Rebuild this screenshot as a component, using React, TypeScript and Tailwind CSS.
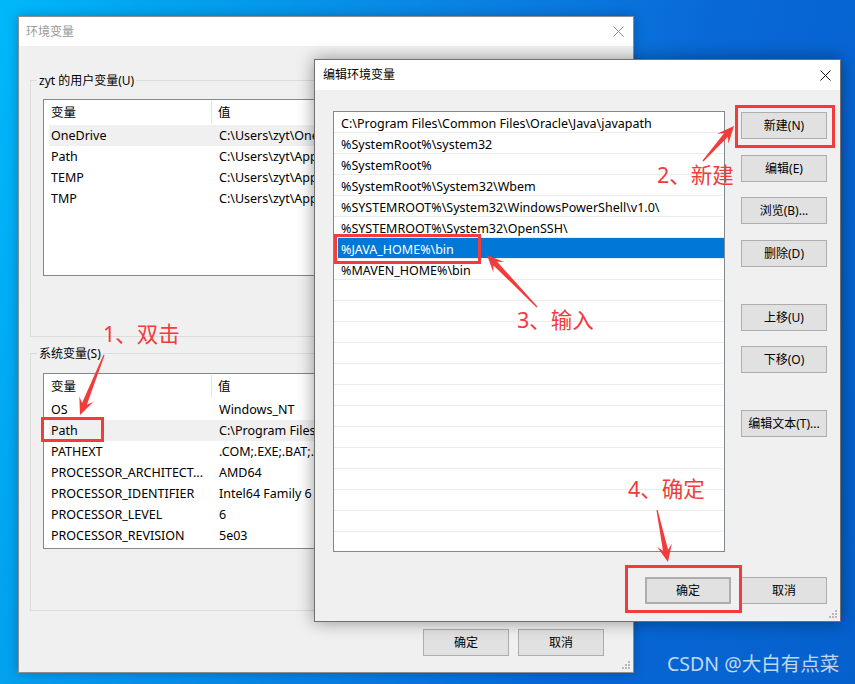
import React from 'react';

type Row = { name: string; value: string };

const userVars: Row[] = [
  { name: 'OneDrive', value: 'C:\\Users\\zyt\\OneDrive' },
  { name: 'Path', value: 'C:\\Users\\zyt\\AppData' },
  { name: 'TEMP', value: 'C:\\Users\\zyt\\AppData' },
  { name: 'TMP', value: 'C:\\Users\\zyt\\AppData' },
];

const systemVars: Row[] = [
  { name: 'OS', value: 'Windows_NT' },
  { name: 'Path', value: 'C:\\Program Files\\Common' },
  { name: 'PATHEXT', value: '.COM;.EXE;.BAT;.CMD' },
  { name: 'PROCESSOR_ARCHITECT...', value: 'AMD64' },
  { name: 'PROCESSOR_IDENTIFIER', value: 'Intel64 Family 6 Model' },
  { name: 'PROCESSOR_LEVEL', value: '6' },
  { name: 'PROCESSOR_REVISION', value: '5e03' },
];

const pathEntries = [
  'C:\\Program Files\\Common Files\\Oracle\\Java\\javapath',
  '%SystemRoot%\\system32',
  '%SystemRoot%',
  '%SystemRoot%\\System32\\Wbem',
  '%SYSTEMROOT%\\System32\\WindowsPowerShell\\v1.0\\',
  '%SYSTEMROOT%\\System32\\OpenSSH\\',
  '%JAVA_HOME%\\bin',
  '%MAVEN_HOME%\\bin',
];

const arrows: [number, number, number, number][] = [
  [104, 355, 80, 415],
  [703, 161, 734, 126],
  [537, 307, 487, 255],
  [657, 510, 668, 562],
];

function arrowPoints([x1, y1, x2, y2]: [number, number, number, number]) {
  const len = Math.hypot(x2 - x1, y2 - y1);
  const dx = (x2 - x1) / len;
  const dy = (y2 - y1) / len;
  const nx = -dy;
  const ny = dx;
  const p = (d: number, w: number) => `${x2 - dx * d + nx * w},${y2 - dy * d + ny * w}`;
  return [p(len, 0.6), p(12, 2.6), p(17, 7.5), p(0, 0), p(17, -7.5), p(12, -2.6), p(len, -0.6)].join(' ');
}

const CloseIcon = ({ color }: { color: string }) => (
  <svg width="11" height="11" viewBox="0 0 11 11">
    <path d="M0.5 0.5L10.5 10.5M10.5 0.5L0.5 10.5" stroke={color} strokeWidth="1" fill="none" />
  </svg>
);

const Grip = () => (
  <svg width="10" height="10" viewBox="0 0 10 10" className="absolute right-[2px] bottom-[2px]">
    {[[8, 2], [8, 5], [5, 5], [8, 8], [5, 8], [2, 8]].map(([x, y]) => (
      <rect key={`${x}-${y}`} x={x - 1} y={y - 1} width="2" height="2" fill="#b9b9b9" />
    ))}
  </svg>
);

const Button: React.FC<{ label: string; className?: string }> = ({ label, className = '' }) => (
  <div
    className={`w-[86px] h-[27px] flex items-center justify-center bg-[#e1e1e1] border border-[#adadad] text-black ${className}`}
  >
    {label}
  </div>
);

// the value column is covered by the front dialog from x=314 on, so it is clipped there
const ListView: React.FC<{ rows: Row[]; selected: number; className: string }> = ({ rows, selected, className }) => (
  <div className={`bg-white border border-[#828790] overflow-hidden text-[12.5px] ${className}`}>
    <div className="h-[25px] flex items-center">
      <div className="w-[168px] h-[23px] pl-[7px] flex items-center border-r border-[#e5e5e5]">变量</div>
      <div className="pl-[6px]">值</div>
    </div>
    {rows.map((row, i) => (
      <div
        key={row.name}
        className={`h-[21px] ml-[5px] flex items-center whitespace-nowrap ${i === selected ? 'bg-[#f0f0f0]' : ''}`}
      >
        <div className="w-[163px] pl-[2px] overflow-hidden">{row.name}</div>
        <div className="w-[103px] pl-[7px] overflow-hidden">{row.value}</div>
      </div>
    ))}
  </div>
);

export default function App() {
  const listRows = Array.from({ length: 21 }, (_, i) => pathEntries[i] ?? '');

  return (
    <div className="relative w-[855px] h-[684px] overflow-hidden font-['Noto_Sans','Noto_Sans_CJK_SC',sans-serif] text-[12px] leading-[16px] text-black bg-[linear-gradient(105deg,#00b8fa_0%,#02a4ef_15%,#0a82e2_45%,#0868d6_70%,#0560cc_100%)]">
      {/* 环境变量 (background window) */}
      <div className="absolute left-[18px] top-[16px] w-[616px] h-[657px] flex flex-col bg-[#f0f0f0] border border-[#8d8d8d] shadow-[0_0_10px_rgba(0,0,0,0.25)]">
        <div className="h-[29px] bg-white flex items-center justify-between pl-[7px] pr-[9px] text-[#999]">
          <span>环境变量</span>
          <CloseIcon color="#8c8c8c" />
        </div>
        <div className="flex-1 flex flex-col px-[11px] pt-[25px]">
          <fieldset className="h-[266px] border border-[#dcdcdc]">
            <legend className="ml-[6px] px-[2px] pt-[2px]">zyt 的用户变量(U)</legend>
            <div className="pl-[12px] pt-[10px]">
              <ListView rows={userVars} selected={0} className="w-[566px] h-[177px]" />
            </div>
          </fieldset>
          <fieldset className="mt-[7px] h-[267px] border border-[#dcdcdc]">
            <legend className="ml-[6px] px-[2px] pt-[2px]">系统变量(S)</legend>
            <div className="pl-[12px] pt-[11px]">
              <ListView rows={systemVars} selected={1} className="w-[566px] h-[176px]" />
            </div>
          </fieldset>
          <div className="mt-[18px] flex justify-end gap-[9px] pr-[18px]">
            <Button label="确定" />
            <Button label="取消" />
          </div>
        </div>
        <Grip />
      </div>

      {/* 编辑环境变量 (front dialog) */}
      <div className="absolute left-[314px] top-[59px] w-[527px] h-[563px] flex flex-col bg-[#f0f0f0] border border-[#707070] shadow-[0_0_16px_rgba(0,0,0,0.4)]">
        <div className="h-[30px] bg-white flex items-center justify-between pl-[8px] pr-[9px]">
          <span>编辑环境变量</span>
          <CloseIcon color="#111" />
        </div>
        <div className="flex pt-[21px] pl-[18px]">
          <div className="w-[392px] h-[441px] bg-white border border-[#828790] overflow-hidden text-[12.5px]">
            {listRows.map((entry, i) => (
              <div
                key={i}
                className={`h-[21px] pt-[3px] border-b border-[#ececec] flex items-center whitespace-nowrap ${
                  i === 6 ? 'ml-[4px] pl-[3px] bg-[#0078d7] text-white' : 'pl-[7px]'
                }`}
              >
                {entry}
              </div>
            ))}
          </div>
          <div className="ml-[16px] pt-[1px] flex flex-col">
            <Button label="新建(N)" />
            <Button label="编辑(E)" className="mt-[16px]" />
            <Button label="浏览(B)..." className="mt-[15px]" />
            <Button label="删除(D)" className="mt-[16px]" />
            <Button label="上移(U)" className="mt-[37px]" />
            <Button label="下移(O)" className="mt-[15px]" />
            <Button label="编辑文本(T)..." className="mt-[37px]" />
          </div>
        </div>
        <div className="mt-[25px] flex justify-end gap-[10px] pr-[13px]">
          <Button label="确定" className="border-2 border-[#0078d7]" />
          <Button label="取消" />
        </div>
        <Grip />
      </div>

      {/* annotations */}
      <div className="absolute left-[41px] top-[417px] w-[63px] h-[25px] border-[3px] border-[#f23b3b]" />
      <div className="absolute left-[334px] top-[234px] w-[147px] h-[30px] border-[3px] border-[#f23b3b]" />
      <div className="absolute left-[735px] top-[105px] w-[100px] h-[43px] border-[3px] border-[#f23b3b]" />
      <div className="absolute left-[625px] top-[565px] w-[117px] h-[48px] border-[3px] border-[#f23b3b]" />

      <span className="absolute left-[103px] top-[323px] text-[21.5px] leading-[22px] text-[#f23b3b]">1、双击</span>
      <span className="absolute left-[657px] top-[164px] text-[21.5px] leading-[22px] text-[#f23b3b]">2、新建</span>
      <span className="absolute left-[517px] top-[309px] text-[21.5px] leading-[22px] text-[#f23b3b]">3、输入</span>
      <span className="absolute left-[628px] top-[478px] text-[21.5px] leading-[22px] text-[#f23b3b]">4、确定</span>

      <svg className="absolute inset-0 pointer-events-none" width="855" height="684">
        {arrows.map((a, i) => (
          <polygon key={i} points={arrowPoints(a)} fill="#f23b3b" />
        ))}
      </svg>

      <span className="absolute left-[667px] top-[652px] text-[19.5px] leading-[24px] text-white/75">CSDN @大白有点菜</span>
    </div>
  );
}
